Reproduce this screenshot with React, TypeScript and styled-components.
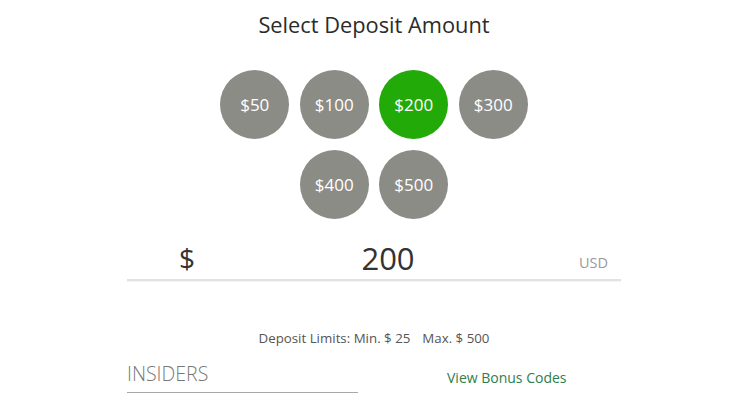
import { createGlobalStyle, styled } from "styled-components";

const GlobalStyle = createGlobalStyle`
  body {
    margin: 0;
    background: #ffffff;
    font-family: "Open Sans", "Liberation Sans", sans-serif;
  }
`;

const Page = styled.div`
  width: 494px;
  margin-left: 127px;
  display: flex;
  flex-direction: column;
  align-items: center;
`;

const Title = styled.h2`
  margin: 10px 0 0;
  font-size: 21.8px;
  font-weight: 400;
  line-height: 30px;
  color: #2b2b2b;
`;

const AmountGrid = styled.div`
  margin-top: 30px;
  display: flex;
  flex-wrap: wrap;
  justify-content: center;
  gap: 11px 10.5px;
  width: 310px;
`;

const AmountButton = styled.button<{ $active?: boolean }>`
  width: 69px;
  height: 69px;
  border-radius: 50%;
  border: none;
  padding: 0;
  background: ${(p) => (p.$active ? "#22aa08" : "#8c8c86")};
  color: #ffffff;
  font-family: inherit;
  font-size: 17px;
  cursor: pointer;
`;

const AmountField = styled.div`
  margin-top: 17px;
  width: 100%;
  height: 43px;
  display: flex;
  align-items: center;
  border-bottom: 2px solid #e2e2e2;
  box-shadow: 0 1px 1px rgba(0, 0, 0, 0.04);
`;

const Currency = styled.span`
  width: 70px;
  padding-left: 52px;
  font-size: 28px;
  color: #333;
  box-sizing: border-box;
  flex: none;
`;

const Value = styled.span`
  flex: 1;
  text-align: center;
  font-size: 31px;
  color: #333;
`;

const Unit = styled.span`
  width: 42px;
  padding-right: 13px;
  padding-top: 10px;
  box-sizing: border-box;
  text-align: right;
  font-size: 14.5px;
  color: #9a9a9a;
  flex: none;
`;

const Limits = styled.p`
  margin: 48px 0 0;
  font-size: 13.3px;
  color: #555;
`;

const Gap = styled.span`
  display: inline-block;
  width: 12px;
`;

const BonusRow = styled.div`
  margin-top: 14px;
  width: 100%;
  display: flex;
  align-items: flex-end;
`;

const CodeInput = styled.div`
  width: 231px;
  padding-bottom: 5px;
  border-bottom: 1px solid #a8a8a8;
  font-size: 19.5px;
  font-weight: 300;
  color: #777;
  line-height: 26px;
`;

const BonusLink = styled.a`
  margin-left: 89px;
  padding-bottom: 6px;
  font-size: 14px;
  color: #2f7d4c;
  text-decoration: none;
`;

const amounts = [50, 100, 200, 300, 400, 500];

export default function App() {
  return (
    <>
      <GlobalStyle />
      <Page>
        <Title>Select Deposit Amount</Title>
        <AmountGrid>
          {amounts.map((a) => (
            <AmountButton key={a} $active={a === 200}>
              ${a}
            </AmountButton>
          ))}
        </AmountGrid>
        <AmountField>
          <Currency>$</Currency>
          <Value>200</Value>
          <Unit>USD</Unit>
        </AmountField>
        <Limits>
          Deposit Limits: Min. $ 25<Gap />Max. $ 500
        </Limits>
        <BonusRow>
          <CodeInput>INSIDERS</CodeInput>
          <BonusLink href="#">View Bonus Codes</BonusLink>
        </BonusRow>
      </Page>
    </>
  );
}
